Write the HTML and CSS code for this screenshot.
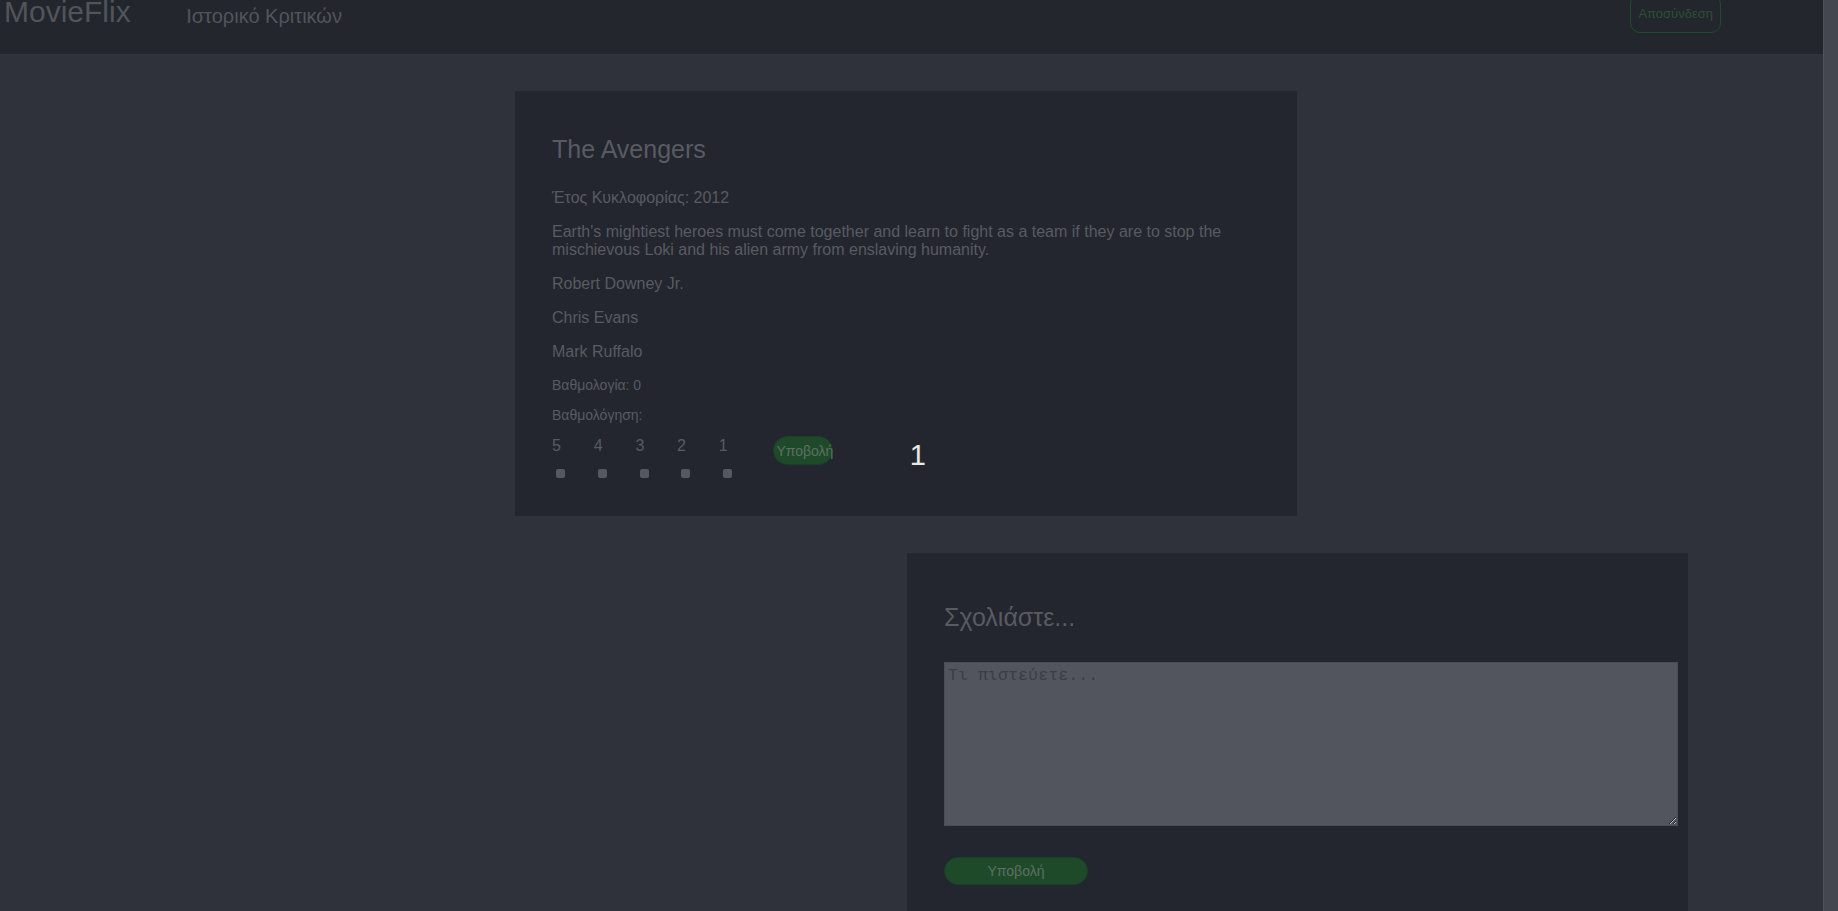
FILE: index.html
```html
<!DOCTYPE html>
<html lang="el">
<head>
<meta charset="utf-8">
<title>MovieFlix</title>
<link rel="stylesheet" href="styles.css">
</head>
<body>
<nav class="navbar">
  <a class="brand" href="#">MovieFlix</a>
  <a class="nav-link" href="#">Ιστορικό Κριτικών</a>
  <button class="logout" type="button">Αποσύνδεση</button>
</nav>
<main class="page">
  <section class="card movie">
    <h2 class="card-title">The Avengers</h2>
    <p class="text">Έτος Κυκλοφορίας: 2012</p>
    <p class="text">Earth's mightiest heroes must come together and learn to fight as a team if they are to stop the mischievous Loki and his alien army from enslaving humanity.</p>
    <p class="text">Robert Downey Jr.</p>
    <p class="text">Chris Evans</p>
    <p class="text">Mark Ruffalo</p>
    <p class="small score">Βαθμολογία: 0</p>
    <p class="small rate-label">Βαθμολόγηση:</p>
    <form class="rate-row">
      <div class="stars">
        <label class="star"><span class="num">5</span><span class="box"></span></label>
        <label class="star"><span class="num">4</span><span class="box"></span></label>
        <label class="star"><span class="num">3</span><span class="box"></span></label>
        <label class="star"><span class="num">2</span><span class="box"></span></label>
        <label class="star"><span class="num">1</span><span class="box"></span></label>
      </div>
      <button class="btn-green btn-small" type="button">Υποβολή</button>
      <span class="count">1</span>
    </form>
  </section>
  <section class="card comment">
    <h2 class="card-title comment-title">Σχολιάστε...</h2>
    <textarea class="comment-box" placeholder="Τι πιστεύετε..."></textarea>
    <button class="btn-green btn-wide" type="button">Υποβολή</button>
  </section>
</main>
<div class="scrollbar"></div>
</body>
</html>
```

FILE: styles.css
```css
* { box-sizing: border-box; }

html { background: #2f323a; }

body {
  margin: 0;
  background: #2f323a;
  font-family: "Liberation Sans", Arial, sans-serif;
  color: #585b62;
}

.scrollbar {
  position: fixed;
  top: 0;
  right: 0;
  width: 15px;
  height: 100%;
  background: #44474f;
  border-left: 1px solid #4f525a;
}

.navbar {
  display: flex;
  align-items: flex-start;
  height: 59px;
  margin-top: -5px;
  padding: 0 117px 0 4px;
  background: #23262d;
}

.brand {
  font-size: 30px;
  line-height: 30px;
  margin-top: 1.6px;
  color: #50545b;
  text-decoration: none;
}

.nav-link {
  font-size: 20px;
  line-height: 20px;
  margin: 11px 0 0 55.5px;
  color: #51555c;
  text-decoration: none;
}

.logout {
  margin: -1px 0 0 auto;
  padding: 11px 7px;
  font-family: "Liberation Sans", Arial, sans-serif;
  font-size: 13px;
  line-height: 15px;
  color: #285235;
  background: transparent;
  border: 1px solid #1d4d2d;
  border-radius: 10px;
}

.page {
  padding: 37px 0 0 515px;
}

.card {
  width: 782px;
  background: #23262e;
  padding: 37px;
}

.movie {
  padding-bottom: 37.5px;
}

.card-title {
  margin: 7px 0 25px;
  font-size: 25px;
  font-weight: normal;
  color: #585b62;
}

.text {
  margin: 0 0 16px;
  font-size: 16px;
}

.small {
  font-size: 14px;
  margin: 0;
}

.score { margin-top: 16px; }
.rate-label { margin-top: 13.5px; }

.rate-row {
  display: flex;
  align-items: flex-start;
  margin-top: 14.5px;
}

.stars { display: flex; }

.star {
  display: flex;
  flex-direction: column;
  align-items: flex-start;
  width: 41.7px;
}

.num {
  font-size: 16px;
  line-height: 18.4px;
}

.box {
  width: 9px;
  height: 9px;
  margin: 14px 0 0 4.4px;
  background: #55585f;
  border-radius: 2px;
}

.btn-green {
  font-family: "Liberation Sans", Arial, sans-serif;
  font-size: 14px;
  color: #5f6f63;
  background: #1e4a2a;
  border: 1px solid #1a4125;
  border-radius: 15px;
}

.btn-small {
  width: 59.4px;
  height: 29.3px;
  padding: 0 2px;
  margin: -1px 0 0 13px;
}

.count {
  margin: 1.5px 0 0 77px;
  font-size: 29px;
  color: #e8e8e8;
}

.comment {
  width: 781px;
  margin-left: 392px;
  margin-top: 37px;
  padding-bottom: 40px;
}

.comment-title {
  margin: 13px 0 30px;
}

.comment-box {
  display: block;
  width: 734px;
  height: 164px;
  padding: 3px;
  font-family: "Liberation Mono", "Courier New", monospace;
  font-size: 16.7px;
  color: #3a3d44;
  background: #52555d;
  border: 1px solid #4a4d55;
}

.comment-box::placeholder { color: #3b3e45; }

.btn-wide {
  display: block;
  width: 144px;
  height: 28px;
  margin-top: 31px;
}
```
